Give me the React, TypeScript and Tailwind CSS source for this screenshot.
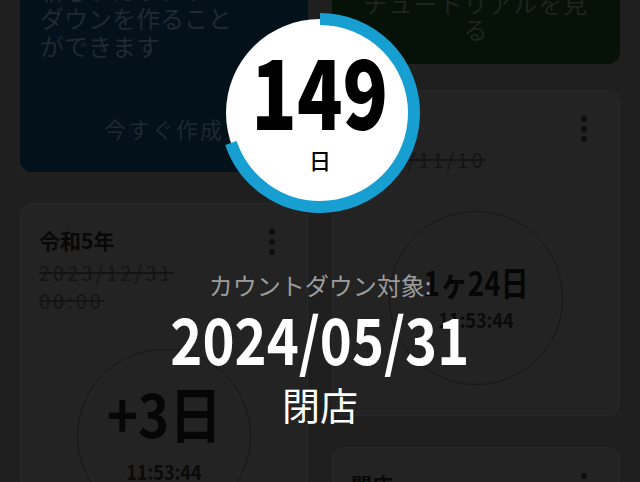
import React from 'react'

function MenuDots() {
  return (
    <div className="flex w-[34px] flex-col items-center gap-[4px] pt-[3px]">
      <span className="h-[6px] w-[6px] rounded-full bg-[#0e0e0e]" />
      <span className="h-[6px] w-[6px] rounded-full bg-[#0e0e0e]" />
      <span className="h-[6px] w-[6px] rounded-full bg-[#0e0e0e]" />
    </div>
  )
}

interface CountdownCardProps {
  title: string
  date: string
  time?: string
  main?: string
  mainClass?: string
  clock?: string
  circleClass?: string
  clockGap?: string
  className?: string
}

function CountdownCard({ title, date, time, main, mainClass, clock, circleClass, clockGap, className }: CountdownCardProps) {
  return (
    <div className={`rounded-xl border border-[#282828] bg-[#232323] pl-[18px] pr-[18px] pt-[22px] pb-[30px] ${className ?? ''}`}>
      <div className="flex items-start justify-between">
        <div className="flex flex-col">
          <h4 className="text-[21px] leading-[28px] font-bold text-[#080808]">{title}</h4>
          {date && (
            <p className="mt-[5px] text-[20px] leading-[28px] tracking-[3px] text-[#141414] line-through decoration-[#141414]">
              {date}
            </p>
          )}
          {time && (
            <p className="text-[20px] leading-[28px] tracking-[3px] text-[#141414] line-through decoration-[#141414]">
              {time}
            </p>
          )}
        </div>
        <MenuDots />
      </div>
      {main && (
        <div className={`mx-auto flex h-[174px] w-[174px] flex-col items-center justify-center rounded-full border border-[#171717] ${circleClass ?? ''}`}>
          <span className={`inline-block font-bold text-[#060606] ${mainClass ?? ''}`}>{main}</span>
          <span className={`inline-block scale-x-[0.9] text-[20px] leading-[24px] font-bold text-[#0a0a0a] ${clockGap ?? ''}`}>{clock}</span>
        </div>
      )}
    </div>
  )
}

function ProgressCircle({ days, progress }: { days: number; progress: number }) {
  const r = 94
  const c = 2 * Math.PI * r
  return (
    <div className="relative h-[200px] w-[200px]">
      <svg className="absolute inset-0" width="200" height="200" viewBox="0 0 200 200">
        <circle cx="100" cy="100" r="94" fill="#ffffff" />
        <circle
          cx="100"
          cy="100"
          r={r}
          fill="none"
          stroke="#189fd2"
          strokeWidth={12}
          strokeDasharray={`${c * progress} ${c}`}
          transform="rotate(-90 100 100)"
        />
      </svg>
      <div className="relative flex h-full flex-col items-center pt-[28px]">
        <span className="inline-block scale-x-[0.78] text-[96px] leading-[96px] font-black text-black">{days}</span>
        <span className="mt-[9px] text-[22px] leading-[26px] font-medium text-black">日</span>
      </div>
    </div>
  )
}

export default function App() {
  return (
    <div className="relative h-[482px] w-[640px] overflow-hidden bg-[#1f1f1f] font-['Noto_Sans_CJK_JP',sans-serif]">
      <div className="-mt-[42px] grid grid-cols-2 gap-6 px-5">
        {/* left column */}
        <div className="flex flex-col">
          <div className="rounded-xl bg-[#02111a] px-5 pt-[18px] pb-4">
            <p className="text-[24px] leading-[28px] text-[#1f2a31]">
              新しいカウント
              <br />
              ダウンを作ること
              <br />
              ができます
            </p>
            <div className="mt-[40px] flex h-[56px] items-center justify-center">
              <span className="text-[22px] tracking-[2px] text-[#1c2930]">今すぐ作成</span>
            </div>
          </div>

          <CountdownCard
            className="mt-[31px]"
            title="令和5年"
            date="2023/12/31"
            time="00:00"
            main="+3日"
            mainClass="scale-x-[0.88] text-[60px] leading-[60px]"
            clock="11:53:44"
            clockGap="mt-[18px]"
            circleClass="mt-[34px] pb-[6px]"
          />
        </div>

        {/* right column */}
        <div className="flex flex-col">
          <div className="rounded-xl bg-[#061208] px-5 pt-8 pb-[22px]">
            <p className="text-center text-[24px] leading-[26px] tracking-[1px] text-[#1c251e]">
              チュートリアルを見
              <br />
              る
            </p>
          </div>

          <CountdownCard
            className="mt-[26px]"
            title="開店"
            date="2023/11/10"
            main="1ヶ24日"
            mainClass="scale-x-[0.82] text-[34px] leading-[36px]"
            clock="11:53:44"
            clockGap="mt-[8px]"
            circleClass="mt-[37px]"
          />

          <CountdownCard className="mt-[31px]" title="閉店" date="" />
        </div>
      </div>

      {/* overlay */}
      <div className="absolute inset-0 flex flex-col items-center pt-[13px]">
        <ProgressCircle days={149} progress={0.697} />
        <p className="mt-[56px] text-[24px] leading-[32px] text-[#9c9c9c]">カウントダウン対象:</p>
        <p className="mt-[4px] inline-block scale-x-[0.85] text-[64px] leading-[64px] font-bold text-white">2024/05/31</p>
        <p className="mt-[13px] text-[38px] leading-[44px] font-normal text-white">閉店</p>
      </div>
    </div>
  )
}
